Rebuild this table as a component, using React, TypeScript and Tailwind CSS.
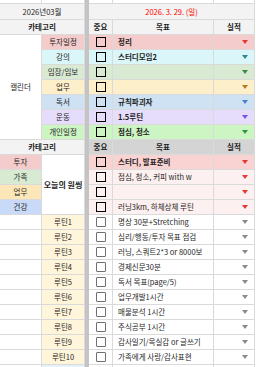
import { Fragment, type ReactNode } from 'react';

const font = { fontFamily: '"Noto Sans CJK KR", "Noto Sans", sans-serif' };

type Row = { label: string; bg: string; arrow: string; goal: string; bold?: boolean };

const calendarRows: Row[] = [
    { label: '투자일정', bg: 'bg-[#f4cccc]', arrow: '#e53935', goal: '정리', bold: true },
    { label: '강의', bg: 'bg-[#daf6f8]', arrow: '#2b8a8a', goal: '스터디모임2', bold: true },
    { label: '임장/임보', bg: 'bg-[#d9ead3]', arrow: '#3a8a4a', goal: '' },
    { label: '업무', bg: 'bg-[#fdefc9]', arrow: '#b8791e', goal: '' },
    { label: '독서', bg: 'bg-[#cfe2f3]', arrow: '#4a80d0', goal: '규칙파괴자', bold: true },
    { label: '운동', bg: 'bg-[#e5ddfb]', arrow: '#7b4ff0', goal: '1.5루틴', bold: true },
    { label: '개인일정', bg: 'bg-[#cdf5c4]', arrow: '#2a9a3a', goal: '점심, 청소', bold: true },
];

const oneThing = [
    { label: '투자', labelBg: 'bg-[#f4cccc]', rowBg: 'bg-[#f9d2d2]', goal: '스터디, 발표준비', bold: true },
    { label: '가족', labelBg: 'bg-[#d9ead3]', rowBg: 'bg-[#fdf0f0]', goal: '점심, 청소, 커피 with w' },
    { label: '업무', labelBg: 'bg-[#fde6b8]', rowBg: 'bg-[#fdf0f0]', goal: '' },
    { label: '건강', labelBg: 'bg-[#c9daf8]', rowBg: 'bg-[#fdf0f0]', goal: '러닝3km, 하체상체 루틴' },
];

const routines = [
    '명상 30분+Stretching',
    '심리/행동/투자 목표 점검',
    '러닝, 스쿼트2*3 or 8000보',
    '경제신문30분',
    '독서 목표(page/5)',
    '업무개발1시간',
    '매물분석 1시간',
    '주식공부 1시간',
    '감사일기/목실감 or 글쓰기',
    '가족에게 사랑/감사표현',
];

function Cell({ className = '', children }: { className?: string; children?: ReactNode }) {
    return (
        <div className={`flex items-center border-b border-r border-[#dadada] overflow-hidden whitespace-nowrap ${className}`}>
            {children}
        </div>
    );
}

const Sep = () => <div className="bg-[#c4c4c4]" />;
const Edge = () => <div className="bg-white" />;

function Arrow({ color }: { color: string }) {
    return (
        <svg width="6" height="4" viewBox="0 0 6 4" className="ml-auto mr-[6px]">
            <polygon points="0,0 6,0 3,4" fill={color} />
        </svg>
    );
}

function Check({ soft }: { soft?: boolean }) {
    return soft ? (
        <span className="block w-[10px] h-[10px] border border-[#707070] rounded-[1px] bg-white" />
    ) : (
        <span className="block w-[10px] h-[10px] border border-black" />
    );
}

export default function App() {
    return (
        <div className="w-[256px] h-[367px] overflow-hidden bg-white text-[#1f1f1f] text-[7.5px]" style={font}>
            <div className="grid grid-cols-[42px_43px_4px_24px_101px_41px_1fr] grid-rows-[4px_16px] auto-rows-[15px]">
                {/* partial row above */}
                <Cell />
                <Cell />
                <Sep />
                <Cell />
                <Cell />
                <Cell />
                <Edge />

                {/* title */}
                <Cell className="col-span-2 justify-center bg-[#f3f3f3]">2026년03월</Cell>
                <Sep />
                <Cell className="col-span-3 justify-center bg-[#f3f3f3] text-[#ff0000]">2026. 3. 29. (일)</Cell>
                <Edge />

                {/* header */}
                <Cell className="col-span-2 justify-center bg-[#f3f3f3] font-semibold">카테고리</Cell>
                <Sep />
                <Cell className="justify-center bg-[#f3f3f3] font-semibold">중요</Cell>
                <Cell className="justify-center bg-[#f3f3f3] font-semibold">목표</Cell>
                <Cell className="justify-center bg-[#f3f3f3] font-semibold">실적</Cell>
                <Edge />

                {/* calendar */}
                <Cell className="row-span-7 justify-center">캘린더</Cell>
                {calendarRows.map((r) => (
                    <Fragment key={r.label}>
                        <Cell className={`justify-center ${r.bg}`}>{r.label}</Cell>
                        <Sep />
                        <Cell className={`justify-center ${r.bg}`}><Check /></Cell>
                        <Cell className={`pl-[5px] ${r.bg} ${r.bold ? 'font-semibold' : ''}`}>{r.goal}</Cell>
                        <Cell className={r.bg}><Arrow color={r.arrow} /></Cell>
                        <Edge />
                    </Fragment>
                ))}

                {/* header 2 */}
                <Cell className="col-span-2 justify-center bg-[#f3f3f3] font-semibold">카테고리</Cell>
                <Sep />
                <Cell className="justify-center bg-[#d4d4d4] font-semibold">중요</Cell>
                <Cell className="justify-center bg-[#d4d4d4] font-semibold">목표</Cell>
                <Cell className="justify-center bg-[#d4d4d4] font-semibold">실적</Cell>
                <Edge />

                {/* one thing */}
                {oneThing.map((r, i) => (
                    <Fragment key={r.label}>
                        <Cell className={`justify-center ${r.labelBg}`}>{r.label}</Cell>
                        {i === 0 && <Cell className="row-span-4 justify-center font-semibold text-[8px]">오늘의 원씽</Cell>}
                        <Sep />
                        <Cell className={`justify-center ${r.rowBg}`}><Check /></Cell>
                        <Cell className={`pl-[5px] ${r.rowBg} ${r.bold ? 'font-semibold' : ''}`}>{r.goal}</Cell>
                        <Cell className={r.rowBg}><Arrow color="#e53935" /></Cell>
                        <Edge />
                    </Fragment>
                ))}

                {/* routines */}
                {routines.map((g, i) => (
                    <Fragment key={g}>
                        <Cell />
                        <Cell className="justify-center bg-[#fff5da]">루틴{i + 1}</Cell>
                        <Sep />
                        <Cell className="justify-center"><Check soft /></Cell>
                        <Cell className="pl-[5px]">{g}</Cell>
                        <Cell><Arrow color="#8a8a8a" /></Cell>
                        <Edge />
                    </Fragment>
                ))}

                {/* partial row below */}
                <Cell />
                <Cell className="bg-[#e6f2fb]" />
                <Sep />
                <Cell />
                <Cell />
                <Cell />
                <Edge />
            </div>
        </div>
    );
}
